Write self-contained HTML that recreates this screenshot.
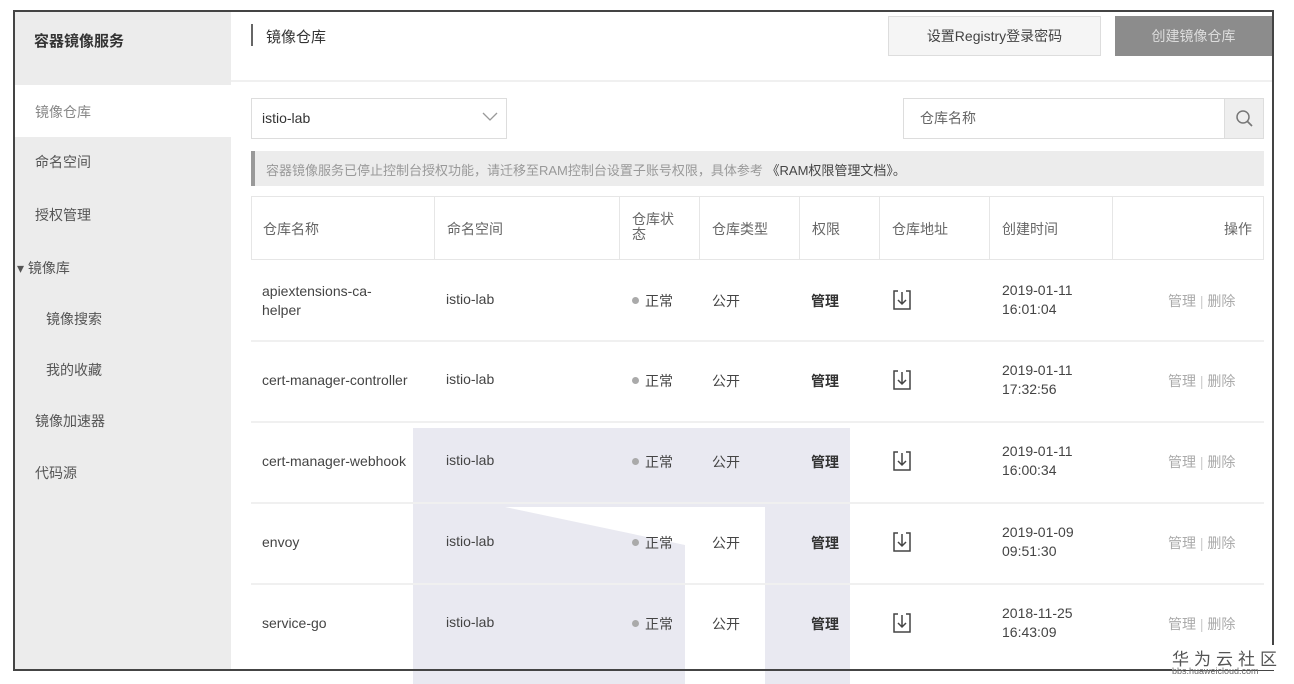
<!DOCTYPE html>
<html><head><meta charset="utf-8"><style>
*{margin:0;padding:0;box-sizing:border-box}
body{width:1294px;height:684px;background:#fff;position:relative;overflow:hidden;font-family:"Liberation Sans","Noto Sans CJK SC",sans-serif;color:#444;font-size:14px}
.a{position:absolute}
.wm{background:#e9e9f1}
.frame{left:13px;top:10px;width:1261px;height:661px;border:2px solid #444;border-right-width:2px}
.side{left:15px;top:12px;width:216px;height:657px;background:#ececec}
.si{left:35px;font-size:14px;color:#555}
.th{top:196px;height:64px;background:#fff;border:1px solid #e6e6e6;border-left:none}
.hd{font-size:14px;color:#666}
.rowline{left:251px;width:1013px;height:2px;background:#f0f0f0}
.c{font-size:14px;color:#444}
.dl{width:18px;height:20px}
</style></head><body>
<div class="a wm" style="left:413px;top:428px;width:437px;height:256px"></div>
<svg class="a" style="left:0;top:0" width="1294" height="684"><polygon points="505,507 765,507 765,684 685,684 685,545" fill="#fff"/></svg>

<div class="a side"></div>
<div class="a" style="left:15px;top:85px;width:216px;height:52px;background:#fff"></div>
<div class="a" style="left:34px;top:30px;font-size:15px;font-weight:bold;color:#333">容器镜像服务</div>
<div class="a si" style="top:102px;color:#888">镜像仓库</div>
<div class="a si" style="top:152px">命名空间</div>
<div class="a si" style="top:205px">授权管理</div>
<div class="a si" style="left:17px;top:258px">▾ 镜像库</div>
<div class="a si" style="left:46px;top:309px">镜像搜索</div>
<div class="a si" style="left:46px;top:360px">我的收藏</div>
<div class="a si" style="top:411px">镜像加速器</div>
<div class="a si" style="top:463px">代码源</div>

<div class="a" style="left:251px;top:24px;width:2px;height:22px;background:#666"></div>
<div class="a" style="left:266px;top:26px;font-size:15px;color:#333">镜像仓库</div>
<div class="a" style="left:231px;top:80px;width:1041px;height:2px;background:#f0f0f0"></div>
<div class="a" style="left:888px;top:16px;width:213px;height:40px;border:1px solid #ddd;background:#f5f5f5;text-align:center;line-height:38px;font-size:14px;color:#444">设置Registry登录密码</div>
<div class="a" style="left:1115px;top:16px;width:157px;height:40px;background:#8c8c8c;text-align:center;line-height:40px;font-size:14px;color:#ddd">创建镜像仓库</div>

<div class="a" style="left:251px;top:98px;width:256px;height:41px;border:1px solid #ddd;line-height:39px;padding-left:10px;color:#333">istio-lab</div>
<svg class="a" style="left:482px;top:112px" width="16" height="10"><path d="M1 1 L8 8 L15 1" fill="none" stroke="#999" stroke-width="1.3"/></svg>
<div class="a" style="left:903px;top:98px;width:322px;height:41px;border:1px solid #ddd;line-height:39px;padding-left:16px;color:#666">仓库名称</div>
<div class="a" style="left:1224px;top:98px;width:40px;height:41px;background:#eee;border:1px solid #ddd"></div>
<svg class="a" style="left:1235px;top:109px" width="20" height="20"><circle cx="8" cy="8" r="6" fill="none" stroke="#777" stroke-width="1.5"/><path d="M12.5 12.5 L17 17" stroke="#777" stroke-width="1.7"/></svg>

<div class="a" style="left:251px;top:151px;width:1013px;height:35px;background:#ececec"></div>
<div class="a" style="left:251px;top:151px;width:4px;height:35px;background:#999"></div>
<div class="a" style="left:266px;top:160px;font-size:13px;color:#999">容器镜像服务已停止控制台授权功能，请迁移至RAM控制台设置子账号权限，具体参考 <span style="color:#444">《RAM权限管理文档》。</span></div>

<div class="a th" style="left:251px;width:184px;border-left:1px solid #e6e6e6"></div>
<div class="a th" style="left:435px;width:185px"></div>
<div class="a th" style="left:620px;width:80px"></div>
<div class="a th" style="left:700px;width:100px"></div>
<div class="a th" style="left:800px;width:80px"></div>
<div class="a th" style="left:880px;width:110px"></div>
<div class="a th" style="left:990px;width:123px"></div>
<div class="a th" style="left:1113px;width:151px"></div>
<div class="a hd" style="left:263px;top:219px">仓库名称</div>
<div class="a hd" style="left:447px;top:219px">命名空间</div>
<div class="a hd" style="left:632px;top:212px;width:44px;line-height:15px">仓库状态</div>
<div class="a hd" style="left:712px;top:219px">仓库类型</div>
<div class="a hd" style="left:812px;top:219px">权限</div>
<div class="a hd" style="left:892px;top:219px">仓库地址</div>
<div class="a hd" style="left:1002px;top:219px">创建时间</div>
<div class="a hd" style="left:1224px;top:219px">操作</div>

<div class="a rowline" style="top:340px"></div>
<div class="a rowline" style="top:421px"></div>
<div class="a rowline" style="top:502px"></div>
<div class="a rowline" style="top:583px"></div>

<div class="a c" style="left:262px;top:282px;line-height:19px">apiextensions-ca-<br>helper</div>
<div class="a c" style="left:262px;top:372px">cert-manager-controller</div>
<div class="a c" style="left:262px;top:453px">cert-manager-webhook</div>
<div class="a c" style="left:262px;top:534px">envoy</div>
<div class="a c" style="left:262px;top:615px">service-go</div>

<div id="rows"></div>
<script>
var ys=[300,380,461,542,623],d=[["2019-01-11","16:01:04"],["2019-01-11","17:32:56"],["2019-01-11","16:00:34"],["2019-01-09","09:51:30"],["2018-11-25","16:43:09"]],h="";
ys.forEach(function(y,i){var t=y-9;
h+='<div class="a c" style="left:446px;top:'+t+'px">istio-lab</div>';
h+='<div class="a" style="left:632px;top:'+(y-3)+'px;width:7px;height:7px;border-radius:50%;background:#aaa"></div>';
h+='<div class="a c" style="left:645px;top:'+t+'px">正常</div>';
h+='<div class="a c" style="left:712px;top:'+t+'px">公开</div>';
h+='<div class="a c" style="left:811px;top:'+t+'px;font-weight:bold;color:#333">管理</div>';
h+='<svg class="a" style="left:892px;top:'+(y-11)+'px" width="20" height="22"><path d="M6 2 H2 V20 H18 V2 H14" fill="none" stroke="#444" stroke-width="1.5"/><path d="M10 3 V15 M6 11 L10 15 L14 11" fill="none" stroke="#444" stroke-width="1.5"/></svg>';
h+='<div class="a c" style="left:1002px;top:'+(y-19)+'px;line-height:19px">'+d[i][0]+'<br>'+d[i][1]+'</div>';
h+='<div class="a" style="left:1168px;top:'+t+'px;color:#aaa">管理 <span style="color:#ccc">|</span> 删除</div>';
});
document.getElementById("rows").innerHTML=h;
</script>

<div class="a frame"></div>
<div class="a" style="left:1172px;top:645px;font-size:17px;letter-spacing:5px;color:#555;background:#fff">华为云社区</div>
<div class="a" style="left:1172px;top:666px;font-size:9px;color:#666">bbs.huaweicloud.com</div>
</body></html>
